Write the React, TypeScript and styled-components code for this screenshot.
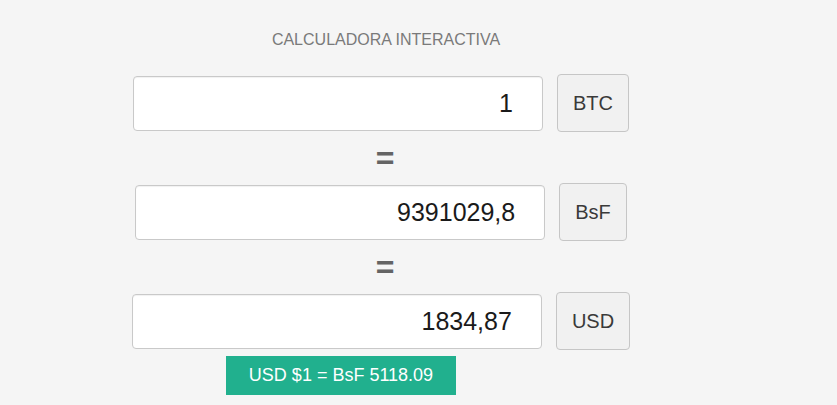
import React from "react";
import styled, { createGlobalStyle } from "styled-components";

const Global = createGlobalStyle`
  html, body {
    margin: 0;
    padding: 0;
    background: #f5f5f5;
    font-family: "Liberation Sans", Arial, sans-serif;
  }
`;

const Page = styled.div`
  width: 837px;
  height: 405px;
  box-sizing: border-box;
  padding-top: 31px;
  display: flex;
  flex-direction: column;
  align-items: flex-start;
`;

const Title = styled.div`
  width: 772px;
  text-align: center;
  font-size: 16px;
  line-height: 18px;
  color: #7a7a7a;
  margin-bottom: 25px;
`;

const Row = styled.div`
  width: 762px;
  display: flex;
  align-items: center;
  justify-content: center;
  gap: 14px;
`;

const Amount = styled.input`
  box-sizing: border-box;
  width: 410px;
  height: 55px;
  border: 1px solid #c9c9c9;
  border-radius: 4px;
  background: #fff;
  box-shadow: inset 0 1px 1px rgba(0, 0, 0, 0.06);
  padding: 0 29px 0 12px;
  text-align: right;
  font-family: "Liberation Sans", Arial, sans-serif;
  font-size: 25px;
  color: #1a1a1a;
  outline: none;
`;

const Currency = styled.button`
  box-sizing: border-box;
  height: 58px;
  padding: 0 15px;
  border: 1px solid #c6c6c6;
  border-radius: 4px;
  background: #f1f1f1;
  font-family: "Liberation Sans", Arial, sans-serif;
  font-size: 20px;
  color: #3a3a3a;
`;

const Equals = styled.div`
  width: 770px;
  height: 51px;
  display: flex;
  align-items: center;
  justify-content: center;
  font-size: 32px;
  font-weight: bold;
  color: #646464;
  line-height: 1;
`;

const Rate = styled.div`
  margin: 6px 0 0 226px;
  width: 230px;
  height: 39px;
  background: #21b08e;
  color: #fff;
  font-size: 18px;
  display: flex;
  align-items: center;
  justify-content: center;
`;

type Conv = { value: string; currency: string };

const rows: Conv[] = [
  { value: "1", currency: "BTC" },
  { value: "9391029,8", currency: "BsF" },
  { value: "1834,87", currency: "USD" },
];

export default function App() {
  return (
    <>
      <Global />
      <Page>
        <Title>CALCULADORA INTERACTIVA</Title>
        {rows.map((r, i) => (
          <React.Fragment key={r.currency}>
            {i > 0 && <Equals>=</Equals>}
            <Row>
              <Amount defaultValue={r.value} />
              <Currency>{r.currency}</Currency>
            </Row>
          </React.Fragment>
        ))}
        <Rate>USD $1 = BsF 5118.09</Rate>
      </Page>
    </>
  );
}
